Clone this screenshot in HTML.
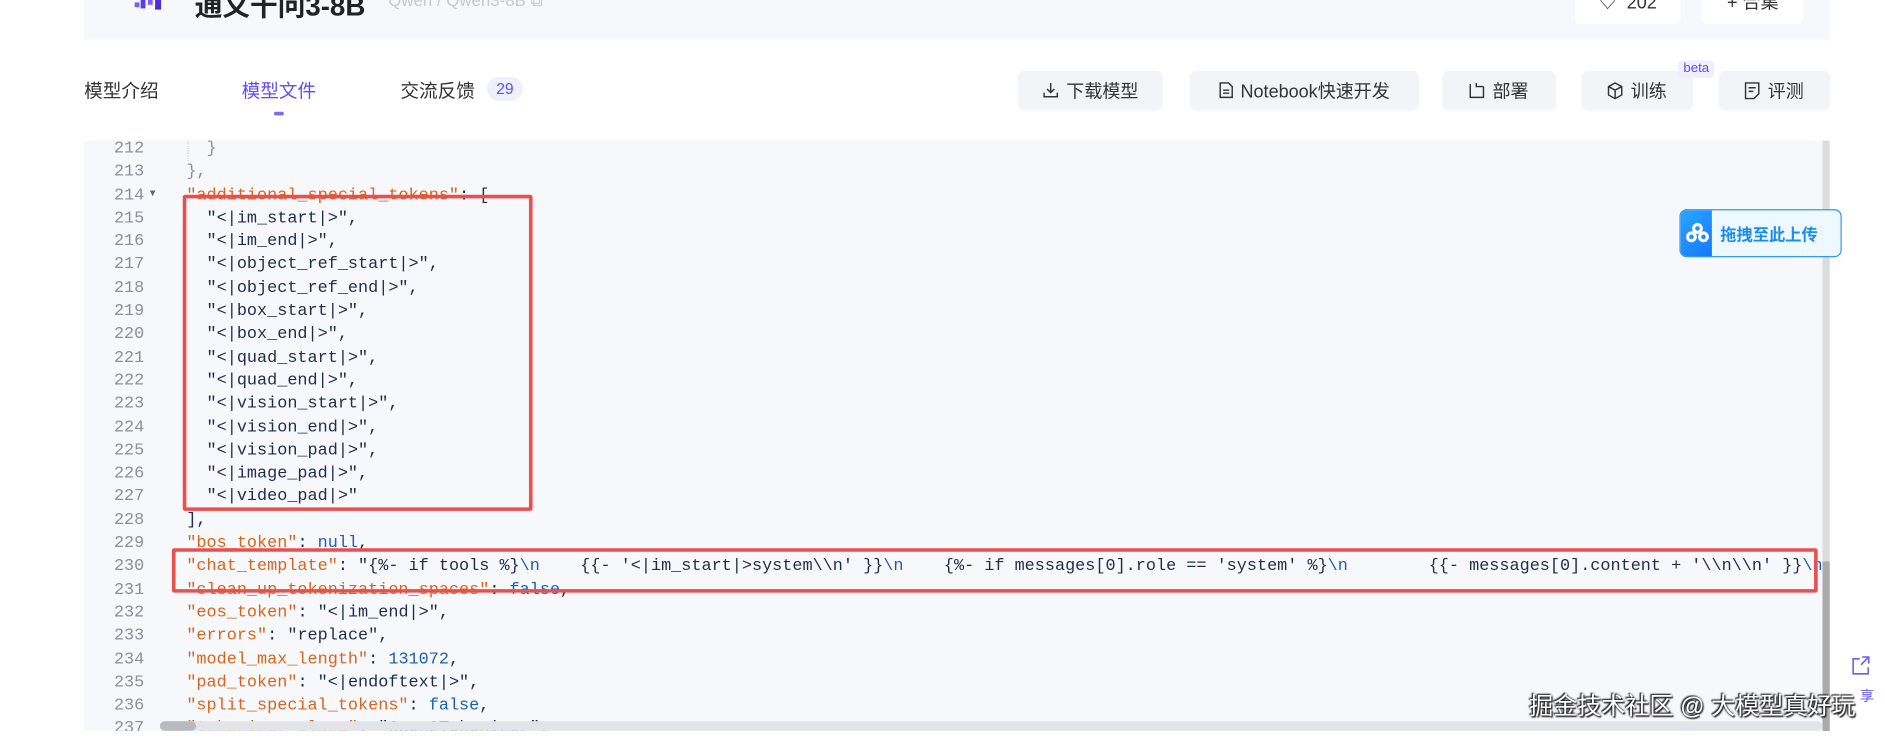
<!DOCTYPE html>
<html><head><meta charset="utf-8"><style>
html,body{margin:0;padding:0;background:#fff;overflow:hidden;width:1885px;height:739px}
#w{position:absolute;left:0;top:0;width:1568px;height:615px;transform:scale(1.20217);transform-origin:0 0;font-family:"Liberation Sans","Noto Sans CJK SC",sans-serif}
.a{position:absolute}
.hdr{left:70px;top:0;width:1452px;height:33px;background:#f7f8fb}
.btn{position:absolute;top:59px;height:32px;background:#f3f4f8;border-radius:5px;font-size:15px;color:#333;display:flex;align-items:center;justify-content:center;gap:6px;box-shadow:0 1px 2px rgba(0,0,0,.04)}
.tab{position:absolute;top:64px;font-size:15.5px;color:#333}
.code{left:70px;top:117px;width:1446px;height:491px;background:#f7f8fb;overflow:hidden}
.ln{position:absolute;left:0;width:50px;text-align:right;font-family:"Liberation Mono",monospace;font-size:14px;color:#8a8f99}
.cl{position:absolute;left:85px;font-family:"Liberation Mono",monospace;font-size:14px;color:#1f2d4d;white-space:pre}
.k{color:#d9651a}.n{color:#1a5fb4}.g{color:#8a8f99}
</style></head><body><div id="w">
<div class="a hdr"></div>
<div class="a" style="left:112px;top:0;width:22px;height:8px">
<div class="a" style="left:0;top:2px;width:4px;height:4px;background:#7c5cff"></div>
<div class="a" style="left:5px;top:0;width:4px;height:7px;background:#5a3ee8"></div>
<div class="a" style="left:11px;top:0;width:4px;height:4px;background:#7c5cff"></div>
<div class="a" style="left:17px;top:0;width:5px;height:8px;background:#4b2fd6"></div>
</div>
<div class="a" style="left:162px;top:-14px;font-size:23px;font-weight:bold;color:#222">通义千问3-8B</div>
<div class="a" style="left:323px;top:-8px;font-size:14px;color:#c5c8d0">Qwen / Qwen3-8B ⧉</div>
<div class="a" style="left:1310px;top:-4px;width:88px;height:24px;background:#fff;border-radius:4px;font-size:15px;color:#333;text-align:center;line-height:14px">♡&nbsp;&nbsp;202</div>
<div class="a" style="left:1416px;top:-4px;width:84px;height:24px;background:#fff;border-radius:4px;font-size:15px;color:#333;text-align:center;line-height:14px">+ 合集</div>

<div class="tab" style="left:70px">模型介绍</div>
<div class="tab" style="left:201px;color:#624aff">模型文件</div>
<div class="a" style="left:228px;top:93px;width:8px;height:3px;background:#7c6cf0;border-radius:1px"></div>
<div class="tab" style="left:333px">交流反馈</div>
<div class="a" style="left:405px;top:64px;width:30px;height:20px;border-radius:10px;background:#eef0fb;color:#624aff;font-size:13px;text-align:center;line-height:20px">29</div>

<div class="btn" style="left:847px;width:120px"><svg width="14" height="14" viewBox="0 0 14 14" fill="none" stroke="#333" stroke-width="1.2"><path d="M7 1v8M4 6l3 3 3-3M1.5 9v3.5h11V9"/></svg>下载模型</div>
<div class="btn" style="left:990px;width:190px"><svg width="12" height="14" viewBox="0 0 12 14" fill="none" stroke="#333" stroke-width="1.2"><path d="M1 1h7l3 3v9H1z M3.5 7h5M3.5 9.5h5"/></svg>Notebook快速开发</div>
<div class="btn" style="left:1200px;width:94px"><svg width="13" height="14" viewBox="0 0 13 14" fill="none" stroke="#333" stroke-width="1.2"><path d="M1 2v11h11V4M6 1v3h6"/></svg>部署</div>
<div class="btn" style="left:1316px;width:92px"><svg width="13" height="15" viewBox="0 0 13 15" fill="none" stroke="#333" stroke-width="1.2"><path d="M6.5 1L12 4v7l-5.5 3L1 11V4z M1 4l5.5 3L12 4M6.5 7v7"/></svg>训练</div>
<div class="a" style="left:1396px;top:50px;width:30px;height:15px;background:#f0efff;border-radius:4px;color:#624aff;font-size:11px;text-align:center;line-height:15px">beta</div>
<div class="btn" style="left:1430px;width:92px"><svg width="13" height="15" viewBox="0 0 13 15" fill="none" stroke="#333" stroke-width="1.2"><path d="M1 1h11v9l-4 4H1z M3.5 5h6M3.5 8h4"/></svg>评测</div>

<div class="a code">
<div class="ln" style="top:-2px;line-height:19.3px">212<br>213<br>214<br>215<br>216<br>217<br>218<br>219<br>220<br>221<br>222<br>223<br>224<br>225<br>226<br>227<br>228<br>229<br>230<br>231<br>232<br>233<br>234<br>235<br>236<br>237</div>
<div class="a" style="left:53px;top:39px;font-size:8px;color:#666">▼</div>
<div class="a" style="left:86px;top:0;height:17px;border-left:1px dotted #ccc"></div>
<div class="cl" style="top:-2px;line-height:19.3px"><span class="g">  }</span>
<span class="g">},</span>
<span class="k">"additional_special_tokens"</span>: [
  "&lt;|im_start|&gt;",
  "&lt;|im_end|&gt;",
  "&lt;|object_ref_start|&gt;",
  "&lt;|object_ref_end|&gt;",
  "&lt;|box_start|&gt;",
  "&lt;|box_end|&gt;",
  "&lt;|quad_start|&gt;",
  "&lt;|quad_end|&gt;",
  "&lt;|vision_start|&gt;",
  "&lt;|vision_end|&gt;",
  "&lt;|vision_pad|&gt;",
  "&lt;|image_pad|&gt;",
  "&lt;|video_pad|&gt;"
],
<span class="k">"bos_token"</span>: <span class="n">null</span>,
<span class="k">"chat_template"</span>: "{%- if tools %}<span class="n">\n</span>    {{- '&lt;|im_start|&gt;system\\n' }}<span class="n">\n</span>    {%- if messages[0].role == 'system' %}<span class="n">\n</span>        {{- messages[0].content + '\\n\\n' }}<span class="n">\n</span>    {%- endif %}
<span class="k">"clean_up_tokenization_spaces"</span>: <span class="n">false</span>,
<span class="k">"eos_token"</span>: "&lt;|im_end|&gt;",
<span class="k">"errors"</span>: "replace",
<span class="k">"model_max_length"</span>: <span class="n">131072</span>,
<span class="k">"pad_token"</span>: "&lt;|endoftext|&gt;",
<span class="k">"split_special_tokens"</span>: <span class="n">false</span>,
<span class="k">"tokenizer_class"</span>: "Qwen2Tokenizer",</div>
<div class="a" style="left:63px;top:483px;width:1383px;height:8px;background:#e3e4e8;border-radius:4px"></div>
<div class="a" style="left:63px;top:483px;width:30px;height:8px;background:#b8babe;border-radius:4px"></div>
</div>
<div class="a" style="left:1516px;top:117px;width:6px;height:491px;background:#dcdcdf"></div>
<div class="a" style="left:1516px;top:467px;width:6px;height:141px;background:#aaa"></div>

<div class="a" style="left:152px;top:162px;width:285px;height:257px;border:3px solid #ea4f4f;border-radius:2px"></div>
<div class="a" style="left:143px;top:456px;width:1363px;height:31px;border:3px solid #ea4f4f;border-radius:2px"></div>

<div class="a" style="left:1397px;top:174px;width:133px;height:38px;border:1px solid #2e9bf0;border-radius:6px;background:#eef8ff;overflow:hidden">
<div class="a" style="left:0;top:0;width:26px;height:38px;background:linear-gradient(135deg,#2ba6ff,#1677ff)"></div>
<svg class="a" style="left:4px;top:10px" width="20" height="18" viewBox="0 0 20 18" fill="none" stroke="#fff" stroke-width="2.6"><circle cx="10" cy="5" r="3.2"/><circle cx="5" cy="12" r="3.2"/><circle cx="15" cy="12" r="3.2"/></svg>
<div class="a" style="left:33px;top:9px;font-size:13.5px;font-weight:bold;color:#1a8cf0">拖拽至此上传</div>
</div>

<svg class="a" style="left:1540px;top:545px" width="16" height="17" viewBox="0 0 16 17" fill="none" stroke="#6a5cf0" stroke-width="1.3"><path d="M7 3H1.5v12.5H14V10M9 1.5h5.5V7M14.5 1.5L8 8"/></svg>
<div class="a" style="left:1547px;top:570px;font-size:12px;color:#6a5cf0">享</div>
<div class="a" style="left:1272px;top:571px;font-size:20px;color:#fff;text-shadow:0 0 2px #222,1px 1px 1px #222,-1px -1px 1px #222;white-space:nowrap">掘金技术社区 @ 大模型真好玩</div>
</div></body></html>
